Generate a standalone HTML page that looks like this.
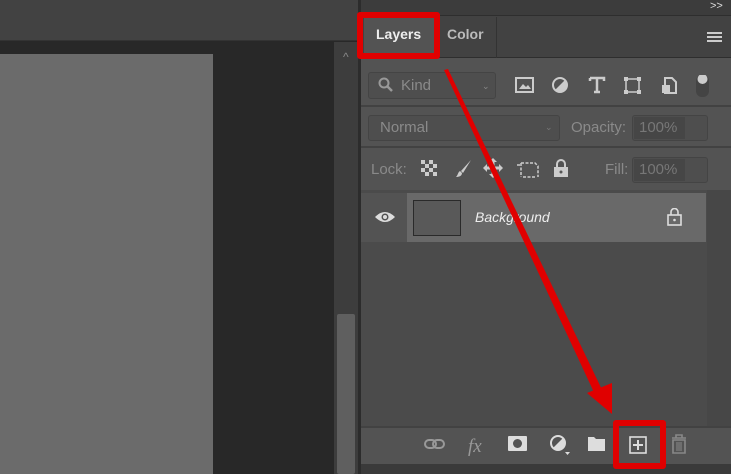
<!DOCTYPE html>
<html><head><style>
*{margin:0;padding:0;box-sizing:border-box}
body{width:731px;height:474px;overflow:hidden;background:#282828;position:relative;font-family:"Liberation Sans",sans-serif}
.a{position:absolute}
.t{color:#8a8a8a;font-size:15px}
.box{border:1px solid #444;border-radius:3px;background:#4e4e4e}
</style></head><body>
<div class="a" style="left:0;top:0;width:358px;height:41px;background:#424242;border-bottom:1px solid #333"></div>
<div class="a" style="left:0;top:54px;width:213px;height:420px;background:#6b6b6b"></div>
<div class="a" style="left:334px;top:42px;width:24px;height:432px;background:#3d3d3d"></div>
<div class="a" style="left:343px;top:50px;color:#888;font-size:12px">^</div>
<div class="a" style="left:337px;top:314px;width:18px;height:160px;background:#5f5f5f;border-radius:2px"></div>
<div class="a" style="left:358px;top:0;width:3px;height:474px;background:#2c2c2c"></div>
<div class="a" style="left:361px;top:0;width:370px;height:474px;background:#535353"></div>
<div class="a" style="left:361px;top:0;width:370px;height:16px;background:#3c3c3c;border-bottom:1px solid #2e2e2e"></div>
<div class="a" style="left:710px;top:0;color:#ddd;font-size:11px">&gt;&gt;</div>
<div class="a" style="left:361px;top:16px;width:370px;height:42px;background:#424242;border-bottom:1px solid #2e2e2e"></div>
<div class="a" style="left:364px;top:18px;width:74px;height:40px;background:#535353"></div>
<div class="a" style="left:376px;top:26px;color:#eee;font-weight:bold;font-size:14px">Layers</div>
<div class="a" style="left:447px;top:26px;color:#bbb;font-weight:bold;font-size:14px">Color</div>
<div class="a" style="left:496px;top:17px;width:1px;height:41px;background:#333"></div>
<div class="a" style="left:707px;top:32px;width:15px;height:10px;border-top:2px solid #ccc;border-bottom:2px solid #ccc"></div>
<div class="a" style="left:707px;top:36px;width:15px;height:2px;background:#ccc"></div>
<div class="a" style="left:361px;top:105px;width:370px;height:2px;background:#424242"></div>
<div class="a box" style="left:368px;top:72px;width:128px;height:27px"></div>
<svg class="a" style="left:378px;top:77px" width="16" height="16"><circle cx="6" cy="6" r="4.5" fill="none" stroke="#999" stroke-width="2"/><path d="M9 9l5 5" stroke="#999" stroke-width="2.5"/></svg>
<div class="a t" style="left:401px;top:77px">Kind</div>
<div class="a" style="left:482px;top:81px;color:#888;font-size:9px">&#8964;</div>
<svg class="a" style="left:515px;top:75px" width="200" height="24">
<rect x="1" y="3" width="17" height="14" fill="none" stroke="#ccc" stroke-width="2"/><path d="M4 14l4-5 3 3 2-2 3 4z" fill="#ccc"/>
<circle cx="45" cy="10" r="7" fill="none" stroke="#ccc" stroke-width="2"/><path d="M40 15L50 5A7 7 0 0 1 40 15z" fill="#ccc"/>
<path d="M75 3h14v3M82 3v14M79 17h6M75 3v3" stroke="#ccc" stroke-width="2.5" fill="none"/>
<rect x="111" y="4" width="13" height="13" fill="none" stroke="#ccc" stroke-width="1.5"/><rect x="109" y="2" width="4" height="4" fill="#ccc"/><rect x="122" y="2" width="4" height="4" fill="#ccc"/><rect x="109" y="15" width="4" height="4" fill="#ccc"/><rect x="122" y="15" width="4" height="4" fill="#ccc"/>
<path d="M150 3h7l4 4v11h-11z" fill="none" stroke="#ccc" stroke-width="2"/><rect x="147" y="10" width="8" height="8" fill="#ccc"/>
<rect x="181" y="0" width="13" height="22" rx="6" fill="#444"/><circle cx="187.5" cy="4" r="5" fill="#ccc"/>
</svg>
<div class="a" style="left:361px;top:146px;width:370px;height:2px;background:#424242"></div>
<div class="a box" style="left:368px;top:115px;width:192px;height:26px"></div>
<div class="a t" style="left:380px;top:119px">Normal</div>
<div class="a" style="left:545px;top:122px;color:#777;font-size:9px">&#8964;</div>
<div class="a t" style="left:571px;top:119px">Opacity:</div>
<div class="a box" style="left:632px;top:115px;width:76px;height:26px"></div>
<div class="a" style="left:634px;top:117px;width:51px;height:22px;background:#464646"></div>
<div class="a t" style="left:639px;top:119px;color:#777">100%</div>
<div class="a t" style="left:371px;top:161px">Lock:</div>
<svg class="a" style="left:420px;top:158px" width="160" height="22">
<rect x="1" y="2" width="16" height="16" fill="#ccc"/><path d="M5 2h4v4H5zM13 2h4v4h-4zM1 6h4v4H1zM9 6h4v4H9zM5 10h4v4H5zM13 10h4v4h-4zM1 14h4v4H1zM9 14h4v4H9z" fill="#555"/>
<path d="M51 2L41 13l2 2z" fill="#ccc"/><path d="M40 13c-2 1-2 4-4 6 3 0 6-1 6-4z" fill="#ccc"/>
<path d="M66 10h14M73 3v14" stroke="#ccc" stroke-width="3"/><path d="M63 10l4-4v8zM83 10l-4-4v8zM73 0l-4 4h8zM73 20l-4-4h8z" fill="#ccc"/>
<path d="M101 5h14l3 3v11M97 7h3M103 19h12M101 5v14" stroke="#ccc" stroke-width="1.5" fill="none" stroke-dasharray="3 1.5"/>
<rect x="134" y="9" width="14" height="10" fill="#ccc"/><path d="M137 10V6a4 4 0 0 1 8 0v4" stroke="#ccc" stroke-width="2" fill="none"/><circle cx="141" cy="14" r="1.5" fill="#555"/>
</svg>
<div class="a t" style="left:605px;top:161px">Fill:</div>
<div class="a box" style="left:632px;top:157px;width:76px;height:26px"></div>
<div class="a" style="left:634px;top:159px;width:51px;height:22px;background:#464646"></div>
<div class="a t" style="left:639px;top:161px;color:#777">100%</div>
<div class="a" style="left:361px;top:190px;width:346px;height:236px;background:#4b4b4b"></div>
<div class="a" style="left:707px;top:190px;width:24px;height:236px;background:#474747"></div>
<div class="a" style="left:407px;top:193px;width:299px;height:49px;background:#696969"></div>
<div class="a" style="left:361px;top:193px;width:46px;height:49px;background:#535353"></div>
<svg class="a" style="left:374px;top:210px" width="22" height="14"><path d="M1 7Q11-3 21 7Q11 17 1 7z" fill="#ddd"/><circle cx="11" cy="7" r="3.5" fill="#535353"/><circle cx="11" cy="7" r="2" fill="#ddd"/></svg>
<div class="a" style="left:413px;top:200px;width:48px;height:36px;background:#595959;border:1px solid #2a2a2a"></div>
<div class="a" style="left:475px;top:209px;color:#eee;font-style:italic;font-size:14px">Background</div>
<svg class="a" style="left:667px;top:208px" width="16" height="18"><rect x="1" y="7" width="13" height="10" fill="none" stroke="#ddd" stroke-width="1.6"/><path d="M4 7V4a3.5 3.5 0 0 1 7 0v3" stroke="#ddd" stroke-width="1.6" fill="none"/><circle cx="7.5" cy="12" r="1.3" fill="#ddd"/></svg>
<div class="a" style="left:361px;top:426px;width:370px;height:2px;background:#424242"></div>
<div class="a" style="left:361px;top:464px;width:370px;height:10px;background:#3a3a3a"></div>
<svg class="a" style="left:420px;top:430px" width="270" height="32">
<rect x="5" y="10" width="11" height="8" rx="4" fill="none" stroke="#999" stroke-width="2"/><rect x="13" y="10" width="11" height="8" rx="4" fill="none" stroke="#999" stroke-width="2"/>
<text x="48" y="22" font-family="Liberation Serif" font-style="italic" font-size="19" fill="#999">fx</text>
<rect x="88" y="6" width="19" height="15" rx="1" fill="#ddd"/><circle cx="97.5" cy="13.5" r="4.5" fill="#535353"/>
<circle cx="138" cy="13" r="7" fill="none" stroke="#ddd" stroke-width="2"/><path d="M133 18L143 8A7 7 0 0 1 133 18z" fill="#ddd"/><path d="M145 22h5l-2.5 3z" fill="#ddd"/>
<path d="M168 7h6l2 2h9v12h-17z" fill="#ddd"/>
<rect x="210" y="7" width="16" height="16" fill="none" stroke="#ddd" stroke-width="1.6"/><path d="M218 10v10M213 15h10" stroke="#ddd" stroke-width="2"/>
<path d="M252 8h14M256 8V5h6v3M253 10h12v13h-12z" stroke="#888" stroke-width="1.6" fill="none"/><path d="M257 12v9M259 12v9M261 12v9" stroke="#888" stroke-width="1"/>
</svg>
<div class="a" style="left:357px;top:12px;width:83px;height:47px;border:6px solid #e00000;border-radius:3px"></div>
<div class="a" style="left:613px;top:420px;width:53px;height:49px;border:6px solid #e00000;border-radius:3px"></div>
<svg class="a" style="left:0;top:0" width="731" height="474">
<path d="M444 70L448 69L606 398L598 401z" fill="#e00000"/>
<path d="M587 393L612 383L612 414z" fill="#e00000"/>
</svg>
</body></html>
